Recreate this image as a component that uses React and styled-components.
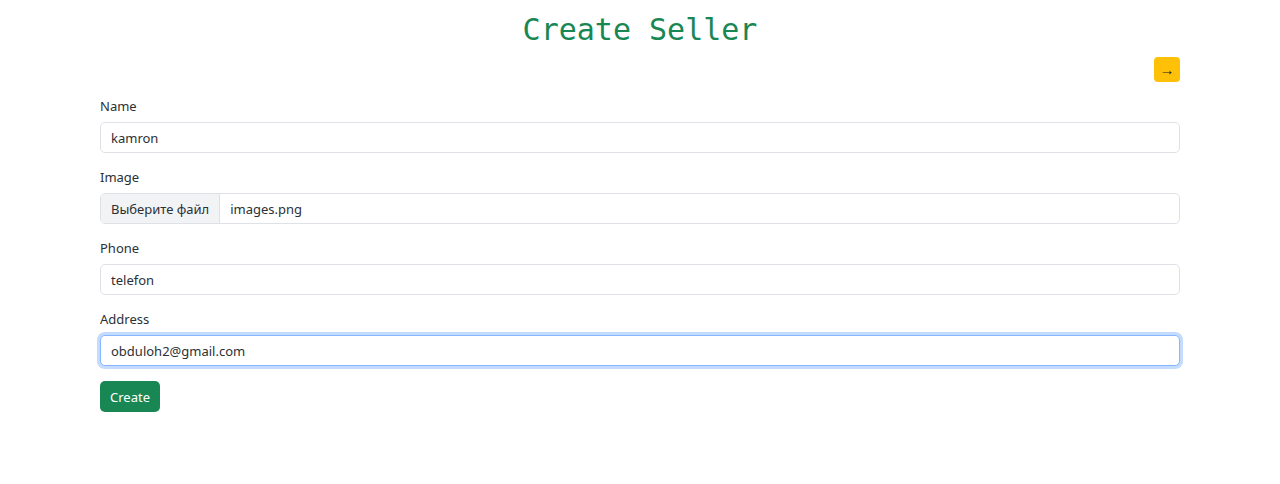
import styled, { createGlobalStyle } from "styled-components";

const GlobalStyle = createGlobalStyle`
  body {
    margin : 0;
    background : #fff;
    font-family : "Segoe UI", "Noto Sans", "Open Sans", sans-serif;
    color : #2b3035;
  }
  * { box-sizing : border-box; }
`;

const StyledWrap = styled.div`
  width : 1080px;
  margin : 0 auto;
  padding-top : 12px;
`;

const StyledTitle = styled.h1`
  margin : 0;
  font-family : "DejaVu Sans Mono", "Liberation Mono", monospace;
  font-weight : 400;
  font-size : 30px;
  line-height : 36px;
  color : #198754;
  text-align : center;
`;

const StyledTopBar = styled.div`
  display : flex;
  justify-content : flex-end;
  margin-top : 9px;
  margin-bottom : 14px;
`;

const StyledBackButton = styled.button`
  width : 26px;
  height : 25px;
  padding : 0;
  border : none;
  border-radius : 4px;
  background-color : #ffc107;
  color : #212529;
  font-size : 15px;
  line-height : 25px;
  cursor : pointer;
`;

const StyledGroup = styled.div`
  margin-bottom : 14px;
`;

const StyledLabel = styled.label`
  display : block;
  font-size : 13px;
  line-height : 20px;
  margin-bottom : 6px;
`;

const StyledInput = styled.input`
  display : block;
  width : 100%;
  height : 31px;
  padding : 0 10px;
  font-family : inherit;
  font-size : 13px;
  color : #2b3035;
  border : 1px solid ${(p) => (p.$focused ? "#86b7fe" : "#dee2e6")};
  border-radius : 5px;
  box-shadow : ${(p) => (p.$focused ? "0 0 0 3px rgba(13,110,253,0.25)" : "none")};
  outline : none;
`;

const StyledFile = styled.div`
  display : flex;
  height : 31px;
  border : 1px solid #dee2e6;
  border-radius : 5px;
  overflow : hidden;
  font-size : 13px;
`;

const StyledFileButton = styled.span`
  display : flex;
  align-items : center;
  padding : 0 10px;
  background : #f1f3f5;
  border-right : 1px solid #dee2e6;
`;

const StyledFileName = styled.span`
  display : flex;
  align-items : center;
  padding : 0 10px;
`;

const StyledCreateButton = styled.button`
  height : 31px;
  margin-top : 1px;
  padding : 0 10px;
  border : none;
  border-radius : 5px;
  background-color : #198754;
  color : #fff;
  font-family : inherit;
  font-size : 13px;
  cursor : pointer;
`;

const App = () => {
  return (
    <>
      <GlobalStyle />
      <StyledWrap>
        <StyledTitle>Create Seller</StyledTitle>
        <StyledTopBar>
          <StyledBackButton>→</StyledBackButton>
        </StyledTopBar>
        <StyledGroup>
          <StyledLabel>Name</StyledLabel>
          <StyledInput defaultValue="kamron" />
        </StyledGroup>
        <StyledGroup>
          <StyledLabel>Image</StyledLabel>
          <StyledFile>
            <StyledFileButton>Выберите файл</StyledFileButton>
            <StyledFileName>images.png</StyledFileName>
          </StyledFile>
        </StyledGroup>
        <StyledGroup>
          <StyledLabel>Phone</StyledLabel>
          <StyledInput defaultValue="telefon" />
        </StyledGroup>
        <StyledGroup>
          <StyledLabel>Address</StyledLabel>
          <StyledInput $focused defaultValue="obduloh2@gmail.com" />
        </StyledGroup>
        <StyledCreateButton>Create</StyledCreateButton>
      </StyledWrap>
    </>
  );
};

export default App;
